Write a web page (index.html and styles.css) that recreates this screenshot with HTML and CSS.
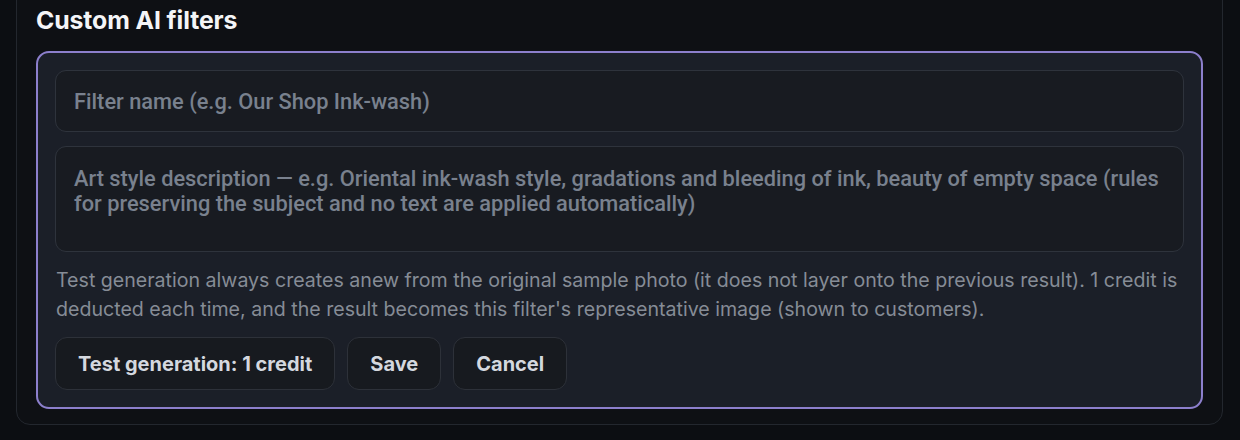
FILE: index.html
```html
<!DOCTYPE html>
<html lang="en">
<head>
<meta charset="utf-8">
<title>Custom AI filters</title>
<link rel="stylesheet" href="styles.css">
</head>
<body>
<section class="card">
  <h2 class="title">Custom AI filters</h2>
  <div class="editor">
    <input class="field" type="text" placeholder="Filter name (e.g. Our Shop Ink-wash)">
    <textarea class="field area" placeholder="Art style description — e.g. Oriental ink-wash style, gradations and bleeding of ink, beauty of empty space (rules for preserving the subject and no text are applied automatically)"></textarea>
    <p class="help">Test generation always creates anew from the original sample photo (it does not layer onto the previous result). 1 credit is deducted each time, and the result becomes this filter's representative image (shown to customers).</p>
    <div class="actions">
      <button class="btn" type="button">Test generation: 1 credit</button>
      <button class="btn" type="button">Save</button>
      <button class="btn" type="button">Cancel</button>
    </div>
  </div>
</section>
</body>
</html>
```

FILE: styles.css
```css
html, body {
  margin: 0;
  padding: 0;
  background: #0c0e12;
  height: 440px;
  overflow: hidden;
}

body {
  padding: 0 17px 0 16px;
  font-family: "Inter", "Noto Sans", sans-serif;
}

.card {
  margin-top: -20px;
  border: 1px solid #23272e;
  border-radius: 14px;
  background: #0e1014;
  padding: 25px 19px 15px 19px;
}

.title {
  margin: 0 0 17px 0;
  font-size: 24.8px;
  line-height: 28px;
  font-weight: 700;
  color: #f4f5f7;
  letter-spacing: -0.1px;
}

.editor {
  border: 2px solid #8c7fcc;
  border-radius: 13px;
  background: #1b1f28;
  padding: 17px 17px 17px 17px;
  display: flex;
  flex-direction: column;
}

.field {
  box-sizing: border-box;
  width: 100%;
  display: block;
  background: #181b21;
  border: 1px solid #2e333c;
  border-radius: 11px;
  color: #cfd3da;
  font-family: "Roboto", "Noto Sans", sans-serif;
  font-weight: 500;
  font-size: 21.8px;
  line-height: 25px;
  padding: 18px 18px;
  height: 62px;
  outline: none;
  margin: 0;
}

.field::placeholder {
  color: #79818e;
  opacity: 1;
}

.area {
  margin-top: 14px;
  height: 106px;
  resize: none;
  padding: 19px 18px;
  overflow: hidden;
}

.help {
  margin: 14px 0 0 1px;
  font-size: 19.6px;
  line-height: 29px;
  color: #868c96;
  font-weight: 400;
}

.actions {
  display: flex;
  gap: 12px;
  margin-top: 13px;
  margin-left: 0;
}

.btn {
  height: 53px;
  padding: 0 22px;
  background: #171a1f;
  border: 1px solid #2d3139;
  border-radius: 12px;
  color: #d4d8df;
  font-family: "Inter", "Noto Sans", sans-serif;
  font-weight: 700;
  font-size: 20px;
  letter-spacing: 0;
}
```
